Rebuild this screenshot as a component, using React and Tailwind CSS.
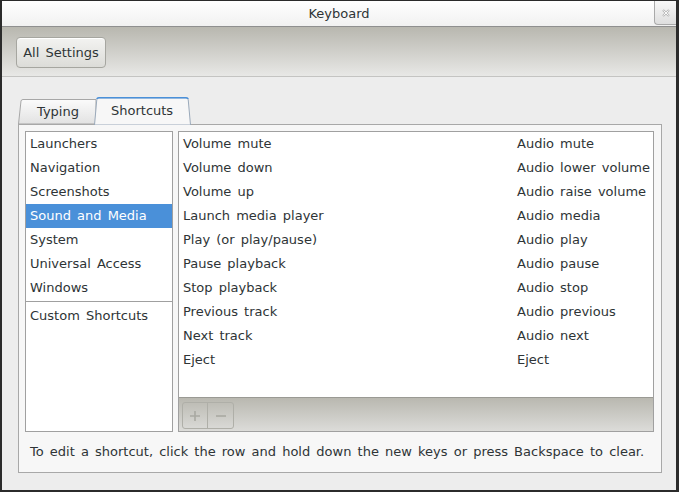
import React from "react";

const categories = [
  "Launchers",
  "Navigation",
  "Screenshots",
  "Sound and Media",
  "System",
  "Universal Access",
  "Windows",
];

const shortcuts = [
  ["Volume mute", "Audio mute"],
  ["Volume down", "Audio lower volume"],
  ["Volume up", "Audio raise volume"],
  ["Launch media player", "Audio media"],
  ["Play (or play/pause)", "Audio play"],
  ["Pause playback", "Audio pause"],
  ["Stop playback", "Audio stop"],
  ["Previous track", "Audio previous"],
  ["Next track", "Audio next"],
  ["Eject", "Eject"],
];

function TypingTab() {
  return (
    <div className="relative w-[78px] h-[25px] flex items-center pl-[19px]">
      <svg className="absolute inset-0" width="78" height="25" viewBox="0 0 78 25">
        <defs>
          <linearGradient id="tg" x1="0" y1="0" x2="0" y2="1">
            <stop offset="0" stopColor="#fbfbfb" />
            <stop offset="1" stopColor="#e2e2e2" />
          </linearGradient>
        </defs>
        <path d="M0.5 25 L3 2 Q3.3 0.5 5 0.5 L78 0.5 L78 25 Z" fill="url(#tg)" stroke="#a7a7a7" />
      </svg>
      <span className="relative">Typing</span>
    </div>
  );
}

function ShortcutsTab() {
  return (
    <div className="relative z-10 -ml-[2px] -mb-px w-[97px] h-[28px] flex items-center pl-[17px]">
      <svg className="absolute inset-0" width="97" height="28" viewBox="0 0 97 28">
        <path d="M0.5 28 L2.8 2.5 Q3 0.8 5 0.8 L92 0.8 Q94 0.8 94.2 2.5 L96.5 28 Z" fill="#f7f7f7" stroke="#9aa9ba" />
        <path d="M2.9 2 Q3.2 0.8 5 0.8 L92 0.8 Q93.8 0.8 94.1 2" fill="none" stroke="#4a90d9" strokeWidth="1.6" />
      </svg>
      <span className="relative">Shortcuts</span>
    </div>
  );
}

export default function App() {
  return (
    <div
      className="w-[679px] h-[492px] flex flex-col bg-[#ededed] border-t border-l-2 border-r-[3px] border-b-2 border-[#2b2b2b] text-[13px] text-[#2e3436] overflow-hidden [word-spacing:2px]"
      style={{ fontFamily: '"DejaVu Sans", sans-serif' }}
    >
      {/* Title bar */}
      <div className="relative h-[26px] shrink-0 flex items-center justify-center bg-gradient-to-b from-[#ffffff] to-[#f1f1f1] border-b border-[#8f8f8f]">
        <span className="pt-px">Keyboard</span>
        <div className="absolute right-0 top-0 w-[22px] h-[24px] rounded-bl-[4px] border-l border-b border-[#a9a9a9] bg-gradient-to-b from-[#f7f7f7] to-[#dedede] flex items-center justify-center">
          <svg width="8" height="8" viewBox="0 0 8 8">
            <path d="M1 1 L7 7 M7 1 L1 7" stroke="#b8b8b8" strokeWidth="2.2" />
            <path d="M1.5 1.5 L6.5 6.5 M6.5 1.5 L1.5 6.5" stroke="#ffffff" strokeWidth="0.9" />
          </svg>
        </div>
      </div>

      {/* Toolbar */}
      <div className="h-[50px] shrink-0 bg-gradient-to-b from-[#b8b7af] to-[#e8e8e6] border-b border-[#c4c4c2] pl-[14px] pt-[10px]">
        <div className="w-[90px] h-[31px] rounded-[4px] border border-[#a6a6a0] bg-gradient-to-b from-[#f3f3f1] to-[#dcdcd8] flex items-center justify-center shadow-[inset_0_1px_0_#ffffff]">
          All Settings
        </div>
      </div>

      {/* Body */}
      <div className="flex-1 flex flex-col pl-[16px] pr-[14px] pt-[20px] pb-[17px]">
        <div className="h-[27px] flex items-end shrink-0">
          <TypingTab />
          <ShortcutsTab />
        </div>
        <div className="flex-1 flex flex-col border border-[#a8a8a8] bg-[#f7f7f7] pt-[6px] pl-[6px] pr-[7px]">
          <div className="h-[301px] flex gap-[5px]">
            {/* Categories */}
            <div className="w-[148px] h-full border border-[#a0a0a0] bg-white flex flex-col">
              {categories.map((c) => (
                <div
                  key={c}
                  className={
                    "h-[24px] flex items-center pl-[4px] " +
                    (c === "Sound and Media" ? "bg-[#4a90d9] text-white" : "")
                  }
                >
                  {c}
                </div>
              ))}
              <div className="h-px bg-[#a0a0a0] mt-px mb-[2px]" />
              <div className="h-[24px] flex items-center pl-[4px]">Custom Shortcuts</div>
            </div>
            {/* Shortcuts list */}
            <div className="flex-1 h-full border border-[#a0a0a0] bg-white flex flex-col">
              <div className="flex-1 flex flex-col">
                {shortcuts.map(([a, b]) => (
                  <div key={a} className="h-[24px] flex items-center">
                    <span className="w-[338px] pl-[4px] shrink-0">{a}</span>
                    <span>{b}</span>
                  </div>
                ))}
              </div>
              <div className="h-[34px] shrink-0 border-t border-[#9a9a94] bg-gradient-to-b from-[#b9b8b0] to-[#dcdcd9] pl-[3px] pt-[4px]">
                <div className="w-[52px] h-[27px] flex rounded-[3px] border border-[#afafa8]">
                  <div className="w-[25px] flex items-center justify-center border-r border-[#afafa8]">
                    <svg width="10" height="10" viewBox="0 0 10 10">
                      <path d="M5 0 V10 M0 5 H10" stroke="#a9a9a2" strokeWidth="1.6" />
                    </svg>
                  </div>
                  <div className="flex-1 flex items-center justify-center">
                    <svg width="10" height="10" viewBox="0 0 10 10">
                      <path d="M0 5 H10" stroke="#a9a9a2" strokeWidth="1.6" />
                    </svg>
                  </div>
                </div>
              </div>
            </div>
          </div>
          <div className="flex-1 flex items-center pl-[5px]">
            To edit a shortcut, click the row and hold down the new keys or press Backspace to clear.
          </div>
        </div>
      </div>
    </div>
  );
}
